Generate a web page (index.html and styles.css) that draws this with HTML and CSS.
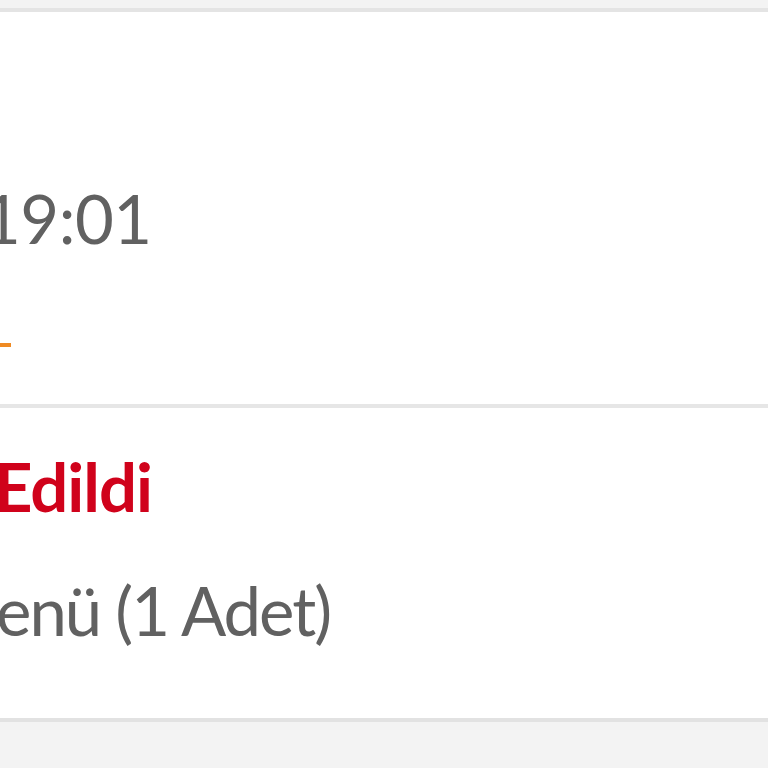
FILE: index.html
```html
<!DOCTYPE html>
<html lang="tr">
<head>
  <meta charset="UTF-8" />
  <meta name="viewport" content="width=device-width, initial-scale=1.0"/>
  <title>Sipariş</title>
  <link rel="stylesheet" href="styles.css">
</head>
<body>

  <div class="top-strip"></div>

  <!-- Order info -->
  <div class="card info">
    <div class="time">19:01</div>
    <div class="link-mark"></div>
  </div>

  <!-- Status -->
  <div class="card status">
    <div class="state">Edildi</div>
    <div class="item">enü (1 Adet)</div>
  </div>

</body>
</html>
```

FILE: styles.css
```css
html, body {
  margin: 0;
  padding: 0;
  overflow: hidden;
}
body {
  font-family: Lato, "Noto Sans", sans-serif;
  background: #f3f3f3;
  color: #616161;
}
.top-strip {
  height: 8px;
  background: #f3f3f3;
}
.card {
  background: white;
}
.info {
  border-top: 4px solid #e4e4e4;
  height: 396px;
  padding-top: 166px;
  box-sizing: border-box;
}
.time {
  font-size: 67px;
  line-height: 80px;
  margin-left: -18px;
  letter-spacing: -0.5px;
}
.link-mark {
  width: 11px;
  height: 4px;
  background: #ef8a23;
  margin-top: 85px;
}
.status {
  border-top: 4px solid #e6e6e6;
  border-bottom: 4px solid #e2e2e2;
  padding: 38px 0 68px;
  box-shadow: 0 2px 3px rgba(0,0,0,0.05);
}
.state {
  font-size: 67px;
  line-height: 80px;
  font-weight: 700;
  color: #d0021b;
  margin-left: -6px;
  letter-spacing: -1px;
}
.item {
  font-size: 67px;
  line-height: 80px;
  margin-top: 44px;
  margin-left: -4px;
  letter-spacing: -2px;
}
```
